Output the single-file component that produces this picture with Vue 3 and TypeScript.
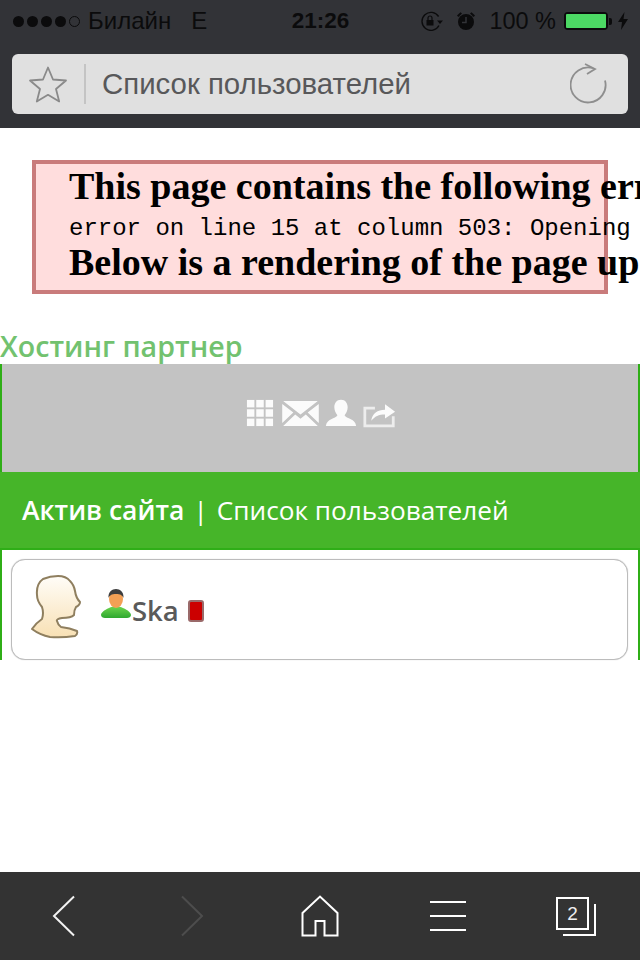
<script setup lang="ts">
const dots = [1, 2, 3, 4]
const gridCells = [0, 1, 2].flatMap((row) => [0, 1, 2].map((col) => ({ x: col * 10, y: row * 10 })))
</script>

<template>
  <div class="phone">
    <header class="top">
      <div class="status">
        <div class="status-left">
          <span class="signal">
            <i v-for="d in dots" :key="d" class="dot" />
            <i class="dot hollow" />
          </span>
          <span class="carrier">Билайн</span>
          <span class="net">E</span>
        </div>
        <div class="time">21:26</div>
        <div class="status-right">
          <svg class="lock" width="24" height="20" viewBox="0 0 24 20" fill="none">
            <path d="M19 14.5A9 9 0 1 1 18.6 5.5" stroke="#0b0b0c" stroke-width="1.4" />
            <path d="M17 9.5h6l-3 3.6z" fill="#0b0b0c" />
            <rect x="6.5" y="9" width="7" height="5.5" fill="#0b0b0c" />
            <path d="M8 9V7a2 2 0 0 1 4 0v2" stroke="#0b0b0c" stroke-width="1.2" />
          </svg>
          <svg class="alarm" width="20" height="20" viewBox="0 0 20 20">
            <circle cx="10" cy="11" r="8" fill="#0b0b0c" />
            <path d="M1 4.5 4.500 1.200 6 2.600 2.400 6zM19 4.500 15.500 1.200 14 2.600 17.600 6z" fill="#0b0b0c" />
            <path d="M10 6v5.500H6" stroke="#323337" stroke-width="1.500" fill="none" />
          </svg>
          <span class="percent">100 %</span>
          <span class="battery"><span class="battery-fill" /></span>
          <span class="battery-tip" />
          <svg class="bolt" width="10" height="18" viewBox="0 0 10 18">
            <path d="M6.500 0 0 10h4l-1 8 7-11H5.500z" fill="#0b0b0c" />
          </svg>
        </div>
      </div>
      <div class="url">
        <svg class="star" width="40" height="38" viewBox="0 0 40 38" fill="none">
          <path d="M20 2.500 25 14.500 38 15.500 28 24 31.200 36.500 20 29.800 8.800 36.500 12 24 2 15.500 15 14.500z" stroke="#8a8a8a" stroke-width="1.800" stroke-linejoin="round" />
        </svg>
        <span class="url-sep" />
        <span class="url-text">Список пользователей</span>
        <svg class="reload" width="38" height="42" viewBox="0 0 38 42" fill="none">
          <path d="M23 5.200A17.500 17.500 0 1 0 35 17.500" stroke="#8e8e8e" stroke-width="1.800" />
          <path d="M15 1 25 6 17 11" stroke="#8e8e8e" stroke-width="1.800" />
        </svg>
      </div>
    </header>

    <main class="page">
      <div class="xml-error">
        <h3>This page contains the following err</h3>
        <pre>error on line 15 at column 503: Opening</pre>
        <h3>Below is a rendering of the page up</h3>
      </div>

      <div class="partner">Хостинг партнер</div>

      <div class="icon-band">
        <svg class="band-grid" width="28" height="28" viewBox="0 0 30 30">
          <rect v-for="c in gridCells" :key="`${c.x}-${c.y}`" :x="c.x + 1" :y="c.y + 1" width="8" height="8" fill="#fff" />
        </svg>
        <svg class="band-mail" width="37" height="25" viewBox="0 0 38 26">
          <path d="M1 0h36L19 14z M0 3 11.500 12 0 23z M38 3 26.500 12 38 23z M1 26 13.500 14 19 18.500 24.500 14 37 26z" fill="#fff" />
        </svg>
        <svg class="band-user" width="32" height="30" viewBox="0 0 36 30">
          <path d="M18 0c5 0 7.500 4 7.500 8.500 0 4-2 7-3.500 9 1 2 4 3 7 4.500 3 1.200 5.500 3.500 6 7.500H1c.5-4 3-6.300 6-7.500 3-1.500 6-2.500 7-4.500-1.500-2-3.500-5-3.500-9C10.500 4 13 0 18 0z" fill="#fff" />
        </svg>
        <svg class="band-share" width="33" height="29" viewBox="0 0 36 30" fill="none">
          <path d="M13 9H2v19.500h31V18" stroke="#fff" stroke-opacity=".75" stroke-width="3" />
          <path d="M9 23c1-8 7-12 15-12V5l11 8-11 7.500V16c-7 0-11 2-15 7z" fill="#fff" />
        </svg>
      </div>

      <div class="crumbs">
        <b>Актив сайта</b>
        <span>|</span>
        <span>Список пользователей</span>
      </div>

      <div class="list">
        <div class="user-card">
          <svg class="avatar" width="52" height="64" viewBox="0 0 52 64">
            <defs>
              <linearGradient id="skin" x1="0" y1="0" x2="0" y2="1">
                <stop offset="0" stop-color="#fffdf8" />
                <stop offset="1" stop-color="#f8e0b4" />
              </linearGradient>
            </defs>
            <path d="M13 4Q20 1 28 1 36 1 40 6 44 10 45 16 46 23 50 27 50 30 46 32 44 35 44 40 41 43 32 43 26 44 27 46 28 50 31 52 40 53 47 56 48 59 45 61 32 63 20 62 10 60 2 54 6 48 12 44 14 38 12 32 7 26 7 20 6 9 13 4z" fill="url(#skin)" stroke="#8f7f5f" stroke-width="2" stroke-linejoin="round" />
          </svg>
          <svg class="user-icon" width="32" height="32" viewBox="0 0 32 32">
            <defs>
              <linearGradient id="shirt" x1="0" y1="0" x2="0" y2="1">
                <stop offset="0" stop-color="#6fd64f" />
                <stop offset="1" stop-color="#2fa82f" />
              </linearGradient>
            </defs>
            <path d="M1 27c0-2 3-5 8-7 2-1 4-2 7-2s5 1 7 2c5 2 8 5 8 7 0 2-2 3-4 3H5c-2 0-4-1-4-3z" fill="url(#shirt)" />
            <ellipse cx="16" cy="11" rx="7" ry="9" fill="#f3a055" />
            <path d="M8.500 10C8 4 12 1 16 1s8 3 7.500 9c-1-2.500-3-4-7.500-4S9.500 7.500 8.500 10z" fill="#3e3e3e" />
          </svg>
          <span class="user-name">Ska</span>
          <span class="user-status" />
        </div>
      </div>
    </main>

    <nav class="tabs">
      <div class="tab">
        <svg width="26" height="42" viewBox="0 0 26 42" fill="none">
          <path d="M23 1.500 3 21l20 19.500" stroke="#f2f2f2" stroke-width="2" />
        </svg>
      </div>
      <div class="tab">
        <svg width="26" height="42" viewBox="0 0 26 42" fill="none">
          <path d="M3 1.500 23 21 3 40.500" stroke="#4d4d4d" stroke-width="2" />
        </svg>
      </div>
      <div class="tab">
        <svg width="40" height="42" viewBox="0 0 40 42" fill="none">
          <path d="M2.500 40.500V18L20 1.500 37.500 18v22.500H24.500V26H15.500v14.500z" stroke="#fff" stroke-width="2" />
        </svg>
      </div>
      <div class="tab">
        <div class="menu-icon"><i /><i /><i /></div>
      </div>
      <div class="tab">
        <div class="pages-icon">
          <span class="pages-back" />
          <span class="pages-front">2</span>
        </div>
      </div>
    </nav>
  </div>
</template>

<style>
html,
body {
  margin: 0;
  background: #fff;
}
</style>

<style scoped>
.phone {
  width: 640px;
  height: 960px;
  display: flex;
  flex-direction: column;
  overflow: hidden;
  background: #fff;
}

.top {
  height: 128px;
  flex: none;
  background: #323337;
  box-sizing: border-box;
}

.status {
  height: 44px;
  box-sizing: border-box;
  display: flex;
  align-items: center;
  padding: 0 12px 2px 13px;
  color: #0b0b0c;
  font-family: "Liberation Sans", sans-serif;
  font-size: 24px;
}

.status-left,
.status-right {
  flex: 1;
  display: flex;
  align-items: center;
}

.status-right {
  justify-content: flex-end;
}

.signal {
  display: flex;
  gap: 3px;
}

.dot {
  width: 11px;
  height: 11px;
  border-radius: 50%;
  background: #0b0b0c;
  box-sizing: border-box;
}

.dot.hollow {
  background: none;
  border: 1px solid #0b0b0c;
}

.carrier {
  margin-left: 8px;
}

.net {
  margin-left: 20px;
}

.time {
  font-size: 22.5px;
  font-weight: 700;
}

.lock {
  margin-right: 12px;
}

.alarm {
  margin-right: 13px;
}

.percent {
  margin-right: 8px;
  font-size: 23.5px;
}

.battery {
  width: 44px;
  height: 18px;
  box-sizing: border-box;
  border: 2px solid #0b0b0c;
  border-radius: 4px;
  display: flex;
}

.battery-fill {
  flex: 1;
  background: #4cd964;
  border-radius: 1px;
}

.battery-tip {
  width: 3px;
  height: 7px;
  margin-left: 1px;
  background: #0b0b0c;
  border-radius: 0 2px 2px 0;
}

.bolt {
  margin-left: 6px;
}

.url {
  height: 60px;
  margin: 10px 12px 0;
  display: flex;
  align-items: center;
  padding: 0 20px 0 16px;
  background: #e0e0e0;
  border-radius: 6px;
  font-family: "Liberation Sans", sans-serif;
}

.url-sep {
  width: 2px;
  height: 40px;
  margin-left: 16px;
  background: #c4c4c4;
}

.url-text {
  flex: 1;
  margin-left: 16px;
  font-size: 29.4px;
  color: #58585a;
}

.page {
  flex: 1;
  min-height: 0;
}

.xml-error {
  width: 576px;
  height: 134px;
  margin: 32px 0 0 32px;
  padding: 1px 0 0 33px;
  box-sizing: border-box;
  border: 4px solid #c97b7b;
  background: #ffdddd;
  color: #000;
  white-space: nowrap;
}

.xml-error h3 {
  margin: 0;
  font-family: "Liberation Serif", serif;
  font-size: 38px;
  font-weight: 700;
  line-height: 42px;
}

.xml-error pre {
  margin: 10px 0 0;
  font-family: "Liberation Mono", monospace;
  font-size: 24px;
  line-height: 24px;
}

.partner {
  margin-top: 35px;
  height: 35px;
  font-family: "Open Sans", sans-serif;
  font-size: 28.6px;
  font-weight: 600;
  line-height: 34px;
  color: #72c26f;
}

.icon-band {
  height: 108px;
  box-sizing: border-box;
  display: flex;
  align-items: center;
  justify-content: center;
  padding: 0 0 10px 2px;
  background: #c3c3c3;
  border: solid #2fae17;
  border-width: 0 2px;
}

.icon-band svg {
  filter: blur(0.5px);
  opacity: 0.95;
}

.band-mail {
  margin-left: 8px;
}

.band-user,
.band-share {
  margin-left: 6px;
}

.crumbs {
  height: 78px;
  box-sizing: border-box;
  display: flex;
  align-items: center;
  gap: 9px;
  padding-left: 22px;
  background: #46b529;
  border-bottom: 2px solid #2fae17;
  color: #fff;
  font-family: "Open Sans", sans-serif;
  font-size: 26.2px;
}

.crumbs b {
  font-size: 26.5px;
  font-weight: 600;
}

.list {
  height: 110px;
  box-sizing: border-box;
  padding: 9px 10px 0 9px;
  border: solid #2fae17;
  border-width: 0 2px;
}

.user-card {
  height: 101px;
  box-sizing: border-box;
  display: flex;
  align-items: center;
  padding-left: 18px;
  background: #fff;
  border: 1px solid #bcbcbc;
  border-radius: 14px;
  box-shadow: 0 0 1px #bcbcbc;
  font-family: "Open Sans", sans-serif;
}

.avatar {
  margin: -6px 18px 0 0;
  filter: blur(0.4px);
}

.user-icon {
  margin-top: -12px;
}

.user-name {
  margin-top: 2px;
  font-size: 27.5px;
  font-weight: 600;
  color: #5a5a5a;
}

.user-status {
  width: 16px;
  height: 22px;
  margin: 2px 0 0 9px;
  background: #cc0000;
  border: 2px solid #9a6a6a;
  border-radius: 3px;
  box-sizing: border-box;
}

.tabs {
  height: 88px;
  flex: none;
  display: grid;
  grid-template-columns: repeat(5, 128px);
  background: #333333;
}

.tab {
  display: flex;
  align-items: center;
  justify-content: center;
}

.menu-icon {
  width: 36px;
  display: flex;
  flex-direction: column;
  gap: 12px;
}

.menu-icon i {
  height: 2px;
  background: #fff;
}

.pages-icon {
  position: relative;
  width: 40px;
  height: 40px;
}

.pages-front {
  position: absolute;
  left: 0;
  top: 1px;
  width: 33px;
  height: 33px;
  box-sizing: border-box;
  border: 2px solid #fff;
  display: flex;
  align-items: center;
  justify-content: center;
  color: #eee;
  font-family: "Liberation Sans", sans-serif;
  font-size: 19px;
}

.pages-back {
  position: absolute;
  right: 0;
  bottom: 0;
  width: 33px;
  height: 32px;
  box-sizing: border-box;
  border: solid #fff;
  border-width: 0 2px 2px 0;
}
</style>
